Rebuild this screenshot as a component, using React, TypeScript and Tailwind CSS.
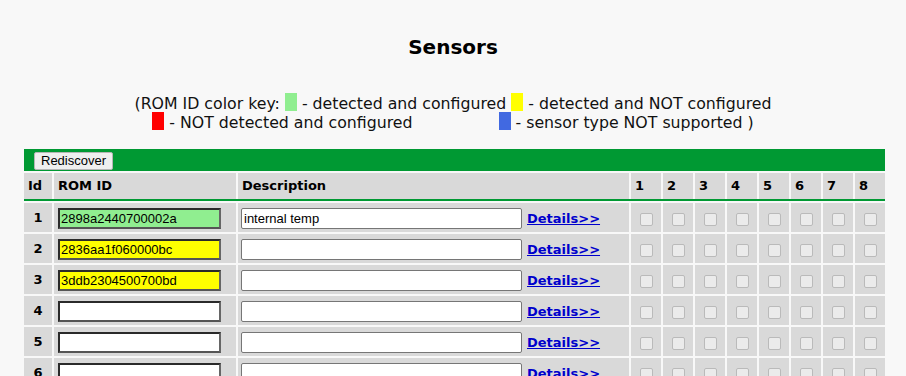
import React from "react";

type Row = { id: number; rom: string; color: string; desc: string };

const rows: Row[] = [
  { id: 1, rom: "2898a2440700002a", color: "bg-[#90ee90]", desc: "internal temp" },
  { id: 2, rom: "2836aa1f060000bc", color: "bg-[#ffff00]", desc: "" },
  { id: 3, rom: "3ddb2304500700bd", color: "bg-[#ffff00]", desc: "" },
  { id: 4, rom: "", color: "bg-white", desc: "" },
  { id: 5, rom: "", color: "bg-white", desc: "" },
  { id: 6, rom: "", color: "bg-white", desc: "" },
  { id: 7, rom: "", color: "bg-white", desc: "" },
  { id: 8, rom: "", color: "bg-white", desc: "" },
];

const grid = "grid grid-cols-[28px_182px_391px_repeat(8,30px)] gap-x-[2px]";
const cell = "bg-[#d9d9d9]";

function Box({ c }: { c: string }) {
  return <span className={`inline-block w-[12px] h-[18px] align-[-2px] ${c}`} />;
}

function Check() {
  return <div className="w-[13px] h-[13px] rounded-[2px] border border-[#bababa] bg-[#ebebeb]" />;
}

export default function App() {
  return (
    <div className="h-[376px] overflow-hidden bg-[#f8f8f8] text-black font-['DejaVu_Sans',Verdana,sans-serif]">
      <h1 className="pt-[35px] text-center text-[20px] leading-[24px] font-bold">Sensors</h1>
      <div className="mt-[34px] text-[15.75px] leading-[19px] text-[#111]">
        <div className="h-[19px] text-center whitespace-pre">
          {"(ROM ID color key: "}
          <Box c="bg-[#90ee90]" />
          {" - detected and configured "}
          <Box c="bg-[#ffff00]" />
          {" - detected and NOT configured"}
        </div>
        <div className="h-[19px] text-center whitespace-pre">
          <Box c="bg-[#ff0000]" />
          {" - NOT detected and configured"}
          <span className="inline-block w-[86px]" />
          <Box c="bg-[#4169e1]" />
          {" - sensor type NOT supported )"}
        </div>
      </div>

      <div className="ml-[24px] mt-[18px] w-[861px]">
        <div className="h-[22px] bg-[#009933] pl-[10px] pt-[3px] flex items-start">
          <button className="h-[18px] px-[6px] border border-[#b5b5b5] rounded-[2px] bg-[#efefef] text-[13px] leading-[16px] text-black font-['Liberation_Sans',Arial,sans-serif]">
            Rediscover
          </button>
        </div>

        <div className={`${grid} mt-[2px] h-[26px] text-[13px] font-bold`}>
          {["Id", "ROM ID", "Description", "1", "2", "3", "4", "5", "6", "7", "8"].map((h) => (
            <div key={h} className={`${cell} flex items-center pl-[4px]`}>
              {h}
            </div>
          ))}
        </div>
        <div className="h-[2px] bg-[#009933]" />

        {rows.map((r) => (
          <div key={r.id} className={`${grid} mt-[2px] h-[29px]`}>
            <div className={`${cell} flex items-center justify-center text-[13px] font-bold`}>{r.id}</div>
            <div className={`${cell} pl-[4px] pt-[5px]`}>
              <input
                readOnly
                defaultValue={r.rom}
                className={`block w-[163px] h-[21px] px-[1px] border-2 border-t-[#2a2a2a] border-l-[#2a2a2a] border-b-[#555] border-r-[#666] text-[13px] text-black outline-none font-['Liberation_Sans',Arial,sans-serif] ${r.color}`}
              />
            </div>
            <div className={`${cell} pl-[3px] pt-[5px] flex items-start`}>
              <input
                readOnly
                defaultValue={r.desc}
                className="block w-[281px] h-[21px] px-[2px] border border-[#767676] rounded-[2px] bg-white text-[13px] text-black outline-none font-['Liberation_Sans',Arial,sans-serif]"
              />
              <a href="#" className="ml-[5px] leading-[21px] text-[13px] font-bold text-[#0000cc] underline">
                Details&gt;&gt;
              </a>
            </div>
            {[1, 2, 3, 4, 5, 6, 7, 8].map((n) => (
              <div key={n} className={`${cell} flex justify-center pt-[10px]`}>
                <Check />
              </div>
            ))}
          </div>
        ))}
      </div>
    </div>
  );
}
